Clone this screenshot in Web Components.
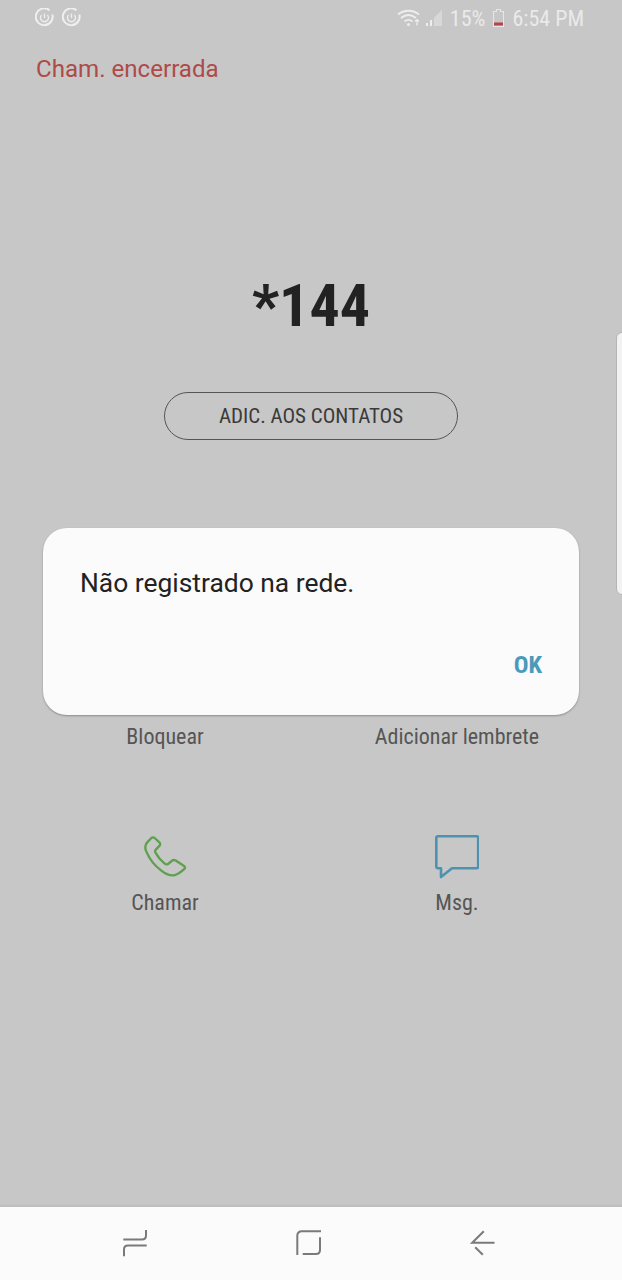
<!DOCTYPE html>
<html lang="pt">
<head>
<meta charset="utf-8">
<title>Chamada encerrada</title>
<style>
    html, body { margin: 0; padding: 0; background: #c7c7c7; }
</style>
</head>
<body>
<call-screen></call-screen>

<script>
class StatusBar extends HTMLElement {
    connectedCallback() {
        this.attachShadow({ mode: 'open' });
        const sync = `
            <svg width="19" height="19" viewBox="0 0 19 19" fill="none" stroke="#efefef">
                <path d="M14.600 2.300A8.400 8.400 0 1 0 17.300 6.500" stroke-width="2"/>
                <path d="M6.700 6.900A4 4 0 1 0 12.300 6.900" stroke-width="1.300"/>
                <path d="M9.500 5.500v4.500" stroke-width="1.300"/>
            </svg>`;
        this.shadowRoot.innerHTML = `
            <style>
                :host {
                    display: flex;
                    align-items: center;
                    justify-content: space-between;
                    height: 36px;
                    padding: 0 38px 0 35px;
                    color: #eaeaea;
                    font: 22px Roboto, sans-serif;
                }
                .left { display: flex; gap: 8px; margin-top: -1px; }
                .right { display: flex; align-items: center; }
                .signal { margin-right: 7px; }
                .battery { margin: 0 7px; }
                .txt { display: inline-block; font-stretch: 75%; }
            </style>
            <div class="left">${sync}${sync}</div>
            <div class="right">
                <svg class="signal" width="46" height="18" viewBox="0 0 46 18" fill="none">
                    <path d="M1 5.500C7 .500 16 .500 22 5.500" stroke="#eee" stroke-width="1.800"/>
                    <path d="M4 9C9 5 14 5 19 9" stroke="#eee" stroke-width="1.800"/>
                    <path d="M7.500 12.500C10 10.500 13 10.500 15.500 12.500" stroke="#eee" stroke-width="1.800"/>
                    <circle cx="11.500" cy="15.500" r="1.500" fill="#eee"/>
                    <path d="M20 16.500v-6m-2 2l2-2 2 2" stroke="#eee" stroke-width="1.200"/>
                    <path d="M29 17h2v-3h-2zM33 17h2v-6h-2z" fill="#eee"/>
                    <path d="M37 17V8.500L45 1v16z" fill="#d8d8d8"/>
                </svg>
                <span class="txt">15%</span>
                <svg class="battery" width="13" height="18" viewBox="0 0 13 18">
                    <path d="M4.500 .5h4v2h3v15h-10v-15h3z" fill="none" stroke="#e6e6e6" stroke-width="1.100"/>
                    <rect x="2" y="13.500" width="9" height="3" fill="#b5434a"/>
                </svg>
                <span class="txt">6:54 PM</span>
            </div>
        `;
    }
}

class ActionItem extends HTMLElement {
    connectedCallback() {
        this.attachShadow({ mode: 'open' });
        this.shadowRoot.innerHTML = `
            <style>
                :host {
                    display: flex;
                    flex-direction: column;
                    align-items: center;
                    color: #555555;
                    font: 22px Roboto, sans-serif;
                    font-stretch: 75%;
                }
                .icon { height: 44px; display: flex; align-items: center; justify-content: center; }
                .label { line-height: 26px; margin-top: 11px; }
            </style>
            <div class="icon"><slot name="icon"></slot></div>
            <div class="label"><slot></slot></div>
        `;
    }
}

class AlertDialog extends HTMLElement {
    connectedCallback() {
        this.attachShadow({ mode: 'open' });
        this.shadowRoot.innerHTML = `
            <style>
                :host {
                    position: absolute;
                    left: 43px;
                    top: 528px;
                    width: 536px;
                    height: 187px;
                    box-sizing: border-box;
                    display: flex;
                    flex-direction: column;
                    justify-content: space-between;
                    padding: 40px 37px 35px;
                    background: #fbfbfb;
                    border-radius: 24px;
                    box-shadow: 0 1px 2px rgba(0, 0, 0, 0.3);
                    font-family: Roboto, sans-serif;
                }
                .msg { font-size: 26.400px; line-height: 30px; color: #222222; }
                .ok {
                    align-self: flex-end;
                    font-size: 24.500px;
                    line-height: 30px;
                    font-weight: 700;
                    font-stretch: 75%;
                    color: #4a9aba;
                }
            </style>
            <div class="msg"><slot></slot></div>
            <div class="ok"><slot name="action"></slot></div>
        `;
    }
}

class NavBar extends HTMLElement {
    connectedCallback() {
        this.attachShadow({ mode: 'open' });
        this.shadowRoot.innerHTML = `
            <style>
                :host {
                    display: grid;
                    grid-template-columns: repeat(3, 174px);
                    align-items: center;
                    justify-items: center;
                    height: 73px;
                    box-sizing: border-box;
                    padding: 0 52px 2px 48px;
                    background: #fbfbfb;
                    box-shadow: 0 -2px 1px #bfbfbf;
                }
                svg { fill: none; stroke: #7a7a7a; stroke-width: 2; }
            </style>
            <svg width="26" height="28" viewBox="0 0 26 28">
                <path d="M1.300 10.500H20q4 0 4-4V1"/>
                <path d="M24.700 16.500H6q-4 0-4 4v6.700"/>
            </svg>
            <svg width="26" height="28" viewBox="0 0 26 28">
                <path d="M25 2.200H6q-4.700 0-4.700 4.500V26"/>
                <path d="M24 8.200V21q0 4-4 4H6.700"/>
            </svg>
            <svg width="26" height="28" viewBox="0 0 26 28">
                <path d="M24.500 13.800H2.200L13.800 2.200"/>
                <path d="M5.200 18.200L12.800 25.800"/>
            </svg>
        `;
    }
}

class CallScreen extends HTMLElement {
    connectedCallback() {
        this.attachShadow({ mode: 'open' });
        this.shadowRoot.innerHTML = `
            <style>
                :host {
                    display: flex;
                    flex-direction: column;
                    position: relative;
                    width: 622px;
                    height: 1280px;
                    overflow: hidden;
                    background: #c7c7c7;
                    font-family: Roboto, sans-serif;
                }
                .state { margin: 18px 0 0 36px; font-size: 24.100px; line-height: 30px; color: #ae4a48; }
                .number {
                    margin-top: 187px;
                    text-align: center;
                    font-size: 60px;
                    line-height: 70px;
                    font-weight: 700;
                    font-stretch: 75%;
                    color: #222222;
                }
                .add {
                    align-self: center;
                    margin-top: 51px;
                    width: 294px;
                    height: 48px;
                    box-sizing: border-box;
                    display: flex;
                    align-items: center;
                    justify-content: center;
                    border: 1.500px solid #555555;
                    border-radius: 24px;
                    font-size: 21px;
                    font-stretch: 75%;
                    color: #3a3a3a;
                }
                .actions {
                    display: grid;
                    grid-template-columns: 1fr 1fr;
                    padding: 0 19px;
                }
                .top { margin-top: 225px; height: 85px; align-items: end; }
                .bottom { flex: 1; align-content: start; padding-top: 85px; }
                .text-only { color: #555; font-size: 22px; font-stretch: 75%; line-height: 26px; text-align: center; }
                .handle {
                    position: absolute;
                    right: -6px;
                    top: 332px;
                    width: 10px;
                    height: 261px;
                    background: #f2f2f2;
                    border: 1px solid #b5b5b5;
                    border-radius: 6px;
                }
            </style>
            <status-bar></status-bar>
            <div class="state">Cham. encerrada</div>
            <div class="number">*144</div>
            <div class="add">ADIC. AOS CONTATOS</div>
            <div class="actions top">
                <div class="text-only">Bloquear</div>
                <div class="text-only">Adicionar lembrete</div>
            </div>
            <div class="actions bottom">
                <action-item>
                    <svg slot="icon" width="45" height="45" viewBox="125 45 135 135" fill="none" stroke="#5ea04e" stroke-width="7" stroke-linejoin="round">
                        <path d="M150 54L137 68Q128 78 135 95Q150 130 180 152Q200 168 218 166Q232 163 250 146Q253 141 247 137L222 121Q216 118 211 123L200 132Q195 135 190 131Q172 116 162 97Q160 92 164 88L175 77Q178 72 175 68L160 54Q155 50 150 54Z"/>
                    </svg>
                    Chamar
                </action-item>
                <action-item>
                    <svg slot="icon" width="44" height="44" viewBox="0 0 44 44" fill="none" stroke="#4d93b1" stroke-width="2.600" stroke-linejoin="round">
                        <path d="M2.800 1.300h38.900a1.500 1.500 0 0 1 1.500 1.500v29a1.500 1.500 0 0 1-1.500 1.500H17L6 42V33.300H2.800a1.500 1.500 0 0 1-1.500-1.500V2.800a1.500 1.500 0 0 1 1.500-1.500z"/>
                    </svg>
                    Msg.
                </action-item>
            </div>
            <nav-bar></nav-bar>
            <div class="handle"></div>
            <alert-dialog>
                Não registrado na rede.
                <span slot="action">OK</span>
            </alert-dialog>
        `;
    }
}

customElements.define('status-bar', StatusBar);
customElements.define('action-item', ActionItem);
customElements.define('alert-dialog', AlertDialog);
customElements.define('nav-bar', NavBar);
customElements.define('call-screen', CallScreen);
</script>
</body>
</html>
